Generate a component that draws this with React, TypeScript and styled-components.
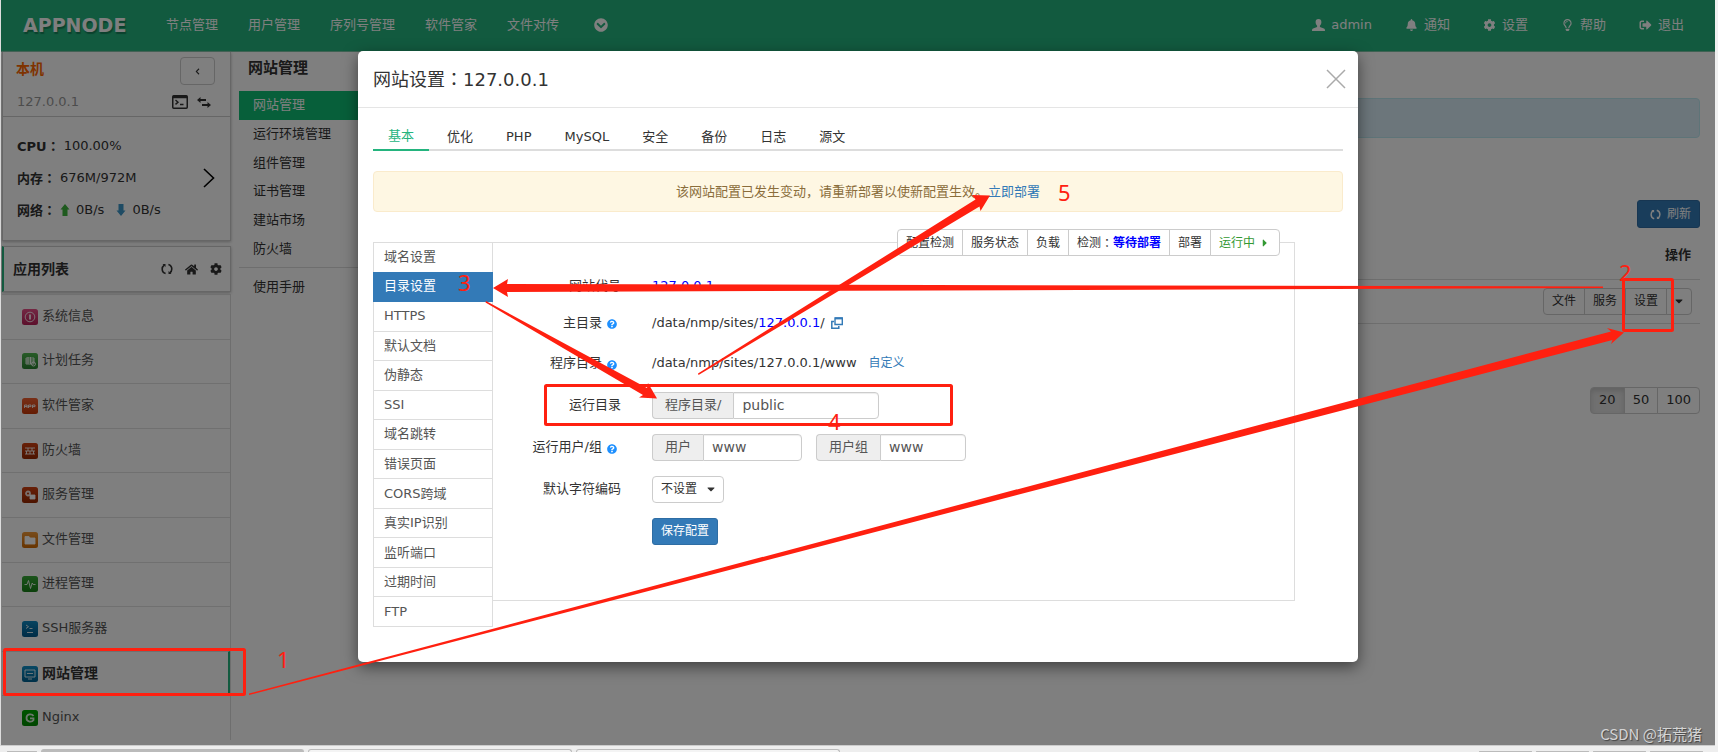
import React from 'react';
import styled, { createGlobalStyle, css } from 'styled-components';
import {
  FaBell, FaCog, FaHome, FaSignOutAlt, FaRegLightbulb, FaChevronLeft,
  FaQuestionCircle, FaChevronCircleDown, FaCaretDown, FaCaretRight,
} from 'react-icons/fa';

const red = '#ff2010';

const GlobalStyle = createGlobalStyle`
  *, *::before, *::after { box-sizing: border-box; }
  html, body { margin: 0; padding: 0; background: #f0f0f0; }
  body, button, input, select {
    font-family: "DejaVu Sans", "Noto Sans CJK SC", sans-serif;
    font-size: 13px;
    line-height: 20px;
    color: #333;
  }
  a { color: inherit; text-decoration: none; }
  button { cursor: pointer; }
  ul { list-style: none; margin: 0; padding: 0; }
  h1, h2 { margin: 0; }
`;

const Screen = styled.div`
  position: relative;
  display: flex;
  flex-direction: column;
  min-height: 100vh;
  overflow: hidden;
`;

const Page = styled.div`
  position: relative;
  flex: 1;
  display: flex;
  flex-direction: column;
  margin-right: 3px;
  background: #fff;
  border-left: 1px solid #ddd;
  border-bottom: 1px solid #ccc;
`;

const Header = styled.header`
  display: flex;
  align-items: center;
  justify-content: space-between;
  height: 52px;
  padding: 0 31px 1px 22px;
  background: #24b47e;
  border-bottom: 1px solid #7cc4a6;
  color: #fff;
`;

const Logo = styled.a`
  width: 143px;
  font-family: "DejaVu Sans", sans-serif;
  font-size: 19px;
  font-weight: bold;
  text-shadow: 1px 2px 1px #16825a;
`;

const Nav = styled.nav<{ $gap: number }>`
  display: flex;
  align-items: center;
  gap: ${p => p.$gap}px;
`;

const Brand = styled.div`
  display: flex;
  align-items: center;
`;

const NavLink = styled.a`
  display: flex;
  align-items: center;
  gap: 6px;
  svg { width: 13px; height: 12px; }
`;

const MoreButton = styled.button`
  display: flex;
  margin-left: 5px;
  padding: 0;
  border: 0;
  background: none;
  color: #fff;
`;

const Body = styled.div`
  flex: 1;
  display: flex;
`;

const Sidebar = styled.aside`
  display: flex;
  flex-direction: column;
  width: 230px;
  padding: 0 0 5px 1px;
`;

const NodeCard = styled.section`
  height: 189px;
  border: 1px solid #ccc;
  border-top: 0;
  box-shadow: 0 1px 3px #bbb;
`;

const NodeHead = styled.div`
  height: 65px;
  padding: 5px 15px 0 13px;
  border-bottom: 1px solid #ccc;
`;

const Line = styled.div`
  display: flex;
  align-items: center;
  justify-content: space-between;
`;

const NodeName = styled.h2`
  margin-bottom: 4px;
  font-size: 14px;
  line-height: 20px;
  color: #ff6600;
`;

const BackButton = styled.button`
  display: flex;
  align-items: center;
  justify-content: center;
  width: 35px;
  height: 28px;
  border: 1px solid #ccc;
  border-radius: 4px;
  background: #fff;
`;

const NodeIp = styled.div`
  display: flex;
  align-items: center;
  justify-content: space-between;
  height: 34px;
  padding: 0 4px 0 1px;
  color: #999;
`;

const IconRow = styled.span<{ $gap: number }>`
  display: flex;
  align-items: center;
  gap: ${p => p.$gap}px;
  color: #333;
`;

const Stats = styled.div`
  display: flex;
  align-items: center;
  justify-content: space-between;
  padding: 13px 15px 0 14px;
`;

const StatRow = styled.div`
  display: flex;
  align-items: center;
  gap: 4px;
  height: 32px;
  svg { margin-right: 2px; }
`;

const DownRate = styled.span`
  display: flex;
  align-items: center;
  gap: 4px;
  margin-left: 8px;
`;

/* The traditional face centres its full-width colon in the em square. */
const Colon = styled.span`
  font-family: "Noto Sans CJK TC", sans-serif;
`;

const AppHead = styled.section`
  display: flex;
  align-items: center;
  justify-content: space-between;
  height: 46px;
  margin: 5px 0 2px;
  padding: 0 8px 0 9px;
  border: 1px solid #ccc;
  border-left: 2px solid #24b47e;
  box-shadow: 0 1px 3px #bbb;
`;

const AppTitle = styled.h2`
  font-size: 14px;
  line-height: 20px;
`;

const AppList = styled.ul`
  flex: 1;
  display: grid;
  grid-auto-rows: 1fr;
  border-right: 1px solid #ddd;
`;

const AppItem = styled.li<{ $active?: boolean }>`
  border-top: 1px solid #e0e0e0;
  color: #555;
  a { display: flex; align-items: center; gap: 4px; height: 100%; padding: 0 0 2px 20px; }
  ${p => p.$active && css`
    border-right: 2px solid #24b47e;
    color: #333;
    font-size: 14px;
    font-weight: bold;
  `}
`;

const SubMenu = styled.nav`
  width: 170px;
  padding: 6px 0 0 8px;
`;

const SubTitle = styled.h2`
  padding-left: 9px;
  font-size: 15px;
  line-height: 20px;
`;

const SubList = styled.ul`
  display: grid;
  grid-auto-rows: 1fr;
  height: 172px;
  margin-top: 13px;
`;

const SubItem = styled.li<{ $active?: boolean }>`
  display: flex;
  align-items: center;
  padding-left: 14px;
  background: ${p => (p.$active ? '#0ebe74' : 'transparent')};
  color: ${p => (p.$active ? '#fff' : '#333')};
`;

const Manual = styled.div`
  margin-top: 4px;
  padding: 9px 14px;
  border-top: 1px solid #ddd;
`;

const Main = styled.main`
  flex: 1;
  display: flex;
  flex-direction: column;
  align-items: flex-end;
  padding: 46px 15px 0 16px;
`;

const Info = styled.div`
  width: 100%;
  height: 40px;
  background: #d9edf7;
  border: 1px solid #bce8f1;
  border-radius: 4px;
`;

const Primary = styled.button<{ $wide?: boolean }>`
  display: flex;
  align-items: center;
  gap: 6px;
  height: ${p => (p.$wide ? 28 : 27)}px;
  padding: 0 8px 0 ${p => (p.$wide ? 12 : 8)}px;
  background: #337ab7;
  border: 1px solid #2e6da4;
  border-radius: 3px;
  color: #fff;
  font-size: 12px;
`;

const RefreshSlot = styled.div`
  margin-top: 62px;
`;

const SiteTable = styled.table`
  width: 100%;
  border-collapse: collapse;
  th { height: 51px; padding: 4px 9px 0; text-align: right; }
  td { height: 44px; padding: 0 8px; border-top: 1px solid #ddd; border-bottom: 1px solid #ddd; }
`;

const Group = styled.div`
  display: flex;
  justify-content: flex-end;
`;

const GroupButton = styled.button<{ $on?: boolean; $size?: number; $color?: string }>`
  display: flex;
  align-items: center;
  height: 27px;
  margin-left: -1px;
  padding: 0 8px;
  border: 1px solid #ccc;
  background: ${p => (p.$on ? '#e0e0e0' : '#fff')};
  box-shadow: ${p => (p.$on ? 'inset 0 3px 5px rgba(0,0,0,.13)' : 'none')};
  font-size: ${p => p.$size ?? 12}px;
  color: ${p => p.$color ?? '#333'};
  &:first-child { margin-left: 0; border-radius: 4px 0 0 4px; }
  &:last-child { border-radius: 0 4px 4px 0; }
  b { color: #00f; }
  svg { margin-left: 4px; }
`;

const CaretButton = styled(GroupButton)`
  padding: 0 6px;
  svg { margin: 0; }
`;

const PageSizes = styled.div`
  margin-top: 63px;
`;

const Backdrop = styled.div`
  position: absolute;
  inset: 0;
  display: flex;
  align-items: flex-start;
  justify-content: center;
  padding-top: 51px;
  background: rgba(0, 0, 0, 0.5);
`;

const Modal = styled.section`
  width: 1000px;
  padding-bottom: 35px;
  background: #fff;
  border-radius: 5px;
  box-shadow: 0 5px 15px rgba(0, 0, 0, 0.5);
`;

const ModalHead = styled.header`
  display: flex;
  align-items: center;
  justify-content: space-between;
  height: 57px;
  padding: 0 12px 1px 15px;
  border-bottom: 1px solid #e5e5e5;
`;

const ModalTitle = styled.h1`
  font-size: 18px;
  font-weight: normal;
  line-height: 26px;
`;

const Close = styled.button`
  display: flex;
  padding: 0;
  border: 0;
  background: none;
`;

const ModalBody = styled.div`
  padding: 14px 15px 0;
`;

const Tabs = styled.div`
  display: flex;
  align-items: flex-end;
  gap: 3px;
  height: 29px;
  border-bottom: 2px solid #ddd;
`;

const Tab = styled.button<{ $active?: boolean }>`
  height: 31px;
  margin-bottom: -2px;
  padding: ${p => (p.$active ? 2 : 5)}px 15px 0;
  border: 0;
  border-bottom: 2px solid ${p => (p.$active ? '#24b47e' : 'transparent')};
  background: none;
  color: ${p => (p.$active ? '#24b47e' : '#333')};
`;

const Warning = styled.div`
  display: flex;
  align-items: center;
  justify-content: center;
  height: 41px;
  margin-top: 20px;
  background: #fef7e3;
  border: 1px solid #faebcc;
  border-radius: 4px;
  color: #8a6d3b;
`;

const Link = styled.a<{ $small?: boolean }>`
  font-size: ${p => (p.$small ? 12 : 13)}px;
  color: #337ab7;
`;

const Settings = styled.div`
  display: flex;
  align-items: flex-start;
  margin-top: 30px;
`;

const SideTabs = styled.ul`
  display: grid;
  grid-auto-rows: 1fr;
  width: 120px;
  height: 385px;
  border: 1px solid #ddd;
  border-bottom: 0;
`;

const SideTab = styled.li<{ $active?: boolean }>`
  display: flex;
  align-items: center;
  padding-left: 10px;
  border-bottom: 1px solid #ddd;
  color: #555;
  ${p => p.$active && css`
    margin: -1px -1px 0;
    padding-left: 11px;
    background: #337ab7;
    border-color: #337ab7;
    color: #fff;
  `}
`;

const Panel = styled.form`
  position: relative;
  flex: 1;
  margin-right: 48px;
  padding: 26px 0 48px;
  border: 1px solid #ddd;
  border-left: 0;
`;

const Actions = styled.div`
  position: absolute;
  top: -14px;
  right: 14px;
  background: #fff;
`;

const Row = styled.div<{ $height?: number }>`
  display: grid;
  grid-template-columns: 128px 1fr;
  align-items: center;
  column-gap: 31px;
  height: ${p => p.$height ?? 42}px;
`;

const Label = styled.label`
  display: flex;
  align-items: center;
  justify-content: flex-end;
  gap: 5px;
  svg { margin: 3px 4px 0 0; color: #1e90ff; }
`;

const Value = styled.div<{ $gap?: number }>`
  display: flex;
  align-items: center;
  gap: ${p => p.$gap ?? 0}px;
  a { color: #00f; }
  ${Link} { color: #337ab7; }
`;

const InputGroup = styled.div`
  display: flex;
  height: 27px;
`;

const Addon = styled.span`
  display: flex;
  align-items: center;
  padding: 0 12px;
  background: #eee;
  border: 1px solid #ccc;
  border-right: 0;
  border-radius: 4px 0 0 4px;
  color: #555;
`;

const Input = styled.input<{ $width: number }>`
  width: ${p => p.$width}px;
  padding: 0 8px;
  border: 1px solid #ccc;
  border-radius: 0 4px 4px 0;
  box-shadow: inset 0 1px 1px rgba(0, 0, 0, 0.075);
  font-size: 14px;
  color: #555;
  outline: 0;
`;

const SelectBox = styled.span`
  display: grid;
  align-items: center;
  justify-items: end;
  width: 72px;
  > * { grid-area: 1 / 1; }
  svg { margin-right: 7px; pointer-events: none; }
`;

const Select = styled.select`
  width: 100%;
  height: 27px;
  padding: 0 8px;
  appearance: none;
  border: 1px solid #ccc;
  border-radius: 4px;
  background: #fff;
  font-size: 12px;
`;

const Footer = styled.footer`
  display: flex;
  align-items: flex-end;
  gap: 4px;
  height: 6px;
  padding: 0 15px 0 7px;
  background: #eee;
`;

const Stub = styled.span<{ $width: number; $kind?: 'fill' | 'open' }>`
  width: ${p => p.$width}px;
  height: ${p => (p.$kind ? 3 : 1)}px;
  border: 1px solid #bbb;
  border-bottom: 0;
  border-radius: 3px 3px 0 0;
  background: ${p => (p.$kind === 'fill' ? '#bbb' : '#f4f4f4')};
`;

const Spacer = styled.span`
  flex: 1;
`;

const Marks = styled.svg`
  position: absolute;
  top: 0;
  left: 0;
  pointer-events: none;
  text { font: 22px "Noto Sans", sans-serif; fill: ${red}; }
`;

const Watermark = styled.span`
  position: absolute;
  right: 16px;
  bottom: 8px;
  font-family: "Noto Sans CJK SC", sans-serif;
  font-size: 15px;
  color: #d4d4d4;
  text-shadow: 1px 1px 1px #444;
`;

const TileBox = styled.svg`
  flex: none;
  margin-top: 2px;
`;

const UserIcon = () => (
  <svg viewBox="0 0 13 12" fill="currentColor">
    <path d="M6.500 0C8.500 0 9.400 1.300 9.400 3c0 1.800-.7 3-1.500 3.800v1.300l4 1.500c.8.300 1.100.9 1.100 2.400H0c0-1.500.3-2.100 1.100-2.400l4-1.500V6.800C4.300 6 3.600 4.800 3.600 3c0-1.700.9-3 2.900-3z" />
  </svg>
);

const RateArrow = ({ down }: { down?: boolean }) => (
  <svg width="10" height="12" viewBox="0 0 10 12" fill={down ? '#3c96c8' : '#3cb43c'}>
    <path d={down ? 'M5 12L.5 6.500h2V0h5v6.500h2z' : 'M5 0l4.500 5.500h-2V12h-5V5.500h-2z'} />
  </svg>
);

const Cycle = ({ size = 12 }: { size?: number }) => (
  <svg width={size} height={size} viewBox="0 0 12 12" fill="none" stroke="currentColor" strokeWidth="1.6">
    <path d="M4.6 10.6C2.6 10 1.2 8.2 1.2 6c0-1.600.8-3 2-3.900M7.400 1.400C9.400 2 10.800 3.800 10.800 6c0 1.600-.8 3-2 3.900" />
    <path d="M1.500 1h3v3zM10.500 11h-3V8z" fill="currentColor" stroke="none" />
  </svg>
);

const TerminalIcon = () => (
  <svg width="16" height="14" viewBox="0 0 16 14" fill="none" stroke="currentColor">
    <rect x=".75" y=".75" width="14.500" height="12.500" rx="1" strokeWidth="1.500" />
    <path d="M1 2h14" strokeWidth="2.500" />
    <path d="M3.500 5l2.500 2.200-2.500 2.200M8 9.500h3.500" strokeWidth="1.400" />
  </svg>
);

const SwapIcon = () => (
  <svg width="14" height="11" viewBox="0 0 14 11" fill="currentColor">
    <path d="M3.500 0v2H9v2H3.500v2L0 3zM10.500 5v2H5v2h5.500v2L14 8z" />
  </svg>
);

const WindowsIcon = () => (
  <svg width="12" height="12" viewBox="0 0 12 12" fill="none" stroke="#337ab7">
    <path d="M4 1h7.300v6.500H4z" strokeWidth="1.400" />
    <path d="M4 1.400h7.500" strokeWidth="2" />
    <path d="M3 4.500H.8v6.800h7V9" strokeWidth="1.500" />
  </svg>
);

const glyphs: Record<string, React.ReactNode> = {
  info: <><circle cx="8" cy="8" r="4.800" /><path d="M8 5.500v5" strokeWidth="2" /></>,
  cron: <><path d="M4 5h8v6H4zM4 7h8M4 9h8M6 4v7M8.500 4v7" /><circle cx="11.500" cy="11" r="2" /></>,
  app: <path d="M2.500 10V7h2.600v3M2.500 8.500h2.600M6.500 10V7H9v1.600H6.500M10.500 10V7H13v1.600h-2.500" />,
  wall: <path d="M3 5h10M3 8h10M3 11h10M6 5v3M10 5v3M4.500 8v3M8 8v3M11.500 8v3" />,
  service: <><circle cx="6" cy="6.500" r="2" strokeWidth="1.800" /><path d="M8 8h5v4H8z" fill="#fff" /></>,
  folder: <path d="M3 4.500h4l1 1.500h5v6H3z" fill="#fff" />,
  pulse: <path d="M2.500 8.500h2.500l1.500-4 2 8L10.200 7l1 1.500h2.300" />,
  ssh: <path d="M4 4l2.500 1.700L4 7.500M7.500 7.500h3M5 11.500h6" />,
  site: <path d="M3 4h10v7H3zM5 7.500h6M6 13h4" />,
  nginx: <path d="M11.500 6C10 3.500 4.500 3.800 4.500 8s5.500 4.500 7 2V8.300H8" strokeWidth="1.800" />,
};

const Tile = ({ name, color, dark }: { name: string; color: string; dark: string }) => (
  <TileBox width="16" height="16" viewBox="0 0 16 16">
    <defs>
      <linearGradient id={`tile-${name}`} x1="0" y1="0" x2="0" y2="1">
        <stop stopColor={color} /><stop offset="1" stopColor={dark} />
      </linearGradient>
    </defs>
    <rect width="16" height="16" rx="2.500" fill={`url(#tile-${name})`} />
    <g fill="none" stroke="#fff" strokeOpacity=".85">{glyphs[name]}</g>
  </TileBox>
);

const apps = [
  ['系统信息', 'info', '#e85088', '#b82058'],
  ['计划任务', 'cron', '#50b850', '#288030'],
  ['软件管家', 'app', '#f06030', '#c83808'],
  ['防火墙', 'wall', '#d04010', '#982800'],
  ['服务管理', 'service', '#d04010', '#982800'],
  ['文件管理', 'folder', '#f09838', '#d06800'],
  ['进程管理', 'pulse', '#38a838', '#188018'],
  ['SSH服务器', 'ssh', '#1088c0', '#00588c'],
  ['网站管理', 'site', '#1090c8', '#006090'],
  ['Nginx', 'nginx', '#00a800', '#008c00'],
];

const sideTabs = ['域名设置', '目录设置', 'HTTPS', '默认文档', '伪静态', 'SSI', '域名跳转', '错误页面', 'CORS跨域', '真实IP识别', '监听端口', '过期时间', 'FTP'];

const Help = () => <FaQuestionCircle size={10} />;

export default function App() {
  return (
    <Screen>
      <GlobalStyle />
      <Page>
        <Header>
          <Brand>
            <Logo href="#">APPNODE</Logo>
            <Nav $gap={30}>
              {['节点管理', '用户管理', '序列号管理', '软件管家', '文件对传'].map(t => <NavLink key={t} href="#">{t}</NavLink>)}
              <MoreButton type="button" aria-label="更多"><FaChevronCircleDown size={14} /></MoreButton>
            </Nav>
          </Brand>
          <Nav $gap={33}>
            <NavLink href="#"><UserIcon />admin</NavLink>
            <NavLink href="#"><FaBell />通知</NavLink>
            <NavLink href="#"><FaCog />设置</NavLink>
            <NavLink href="#"><FaRegLightbulb />帮助</NavLink>
            <NavLink href="#"><FaSignOutAlt />退出</NavLink>
          </Nav>
        </Header>
        <Body>
          <Sidebar>
            <NodeCard>
              <NodeHead>
                <Line>
                  <NodeName>本机</NodeName>
                  <BackButton type="button" aria-label="返回"><FaChevronLeft size={7} /></BackButton>
                </Line>
                <NodeIp>127.0.0.1<IconRow $gap={9}><TerminalIcon /><SwapIcon /></IconRow></NodeIp>
              </NodeHead>
              <Stats>
                <div>
                  <StatRow><b>CPU<Colon>：</Colon></b>100.00%</StatRow>
                  <StatRow><b>内存<Colon>：</Colon></b>676M/972M</StatRow>
                  <StatRow>
                    <b>网络<Colon>：</Colon></b><RateArrow />0B/s
                    <DownRate><RateArrow down />0B/s</DownRate>
                  </StatRow>
                </div>
                <svg width="12" height="20" viewBox="0 0 12 20" fill="none" stroke="#000" strokeWidth="1.600">
                  <path d="M1 1l9.500 9L1 19" />
                </svg>
              </Stats>
            </NodeCard>
            <AppHead>
              <AppTitle>应用列表</AppTitle>
              <IconRow $gap={12}><Cycle /><FaHome size={13} /><FaCog size={12} /></IconRow>
            </AppHead>
            <AppList>
              {apps.map(([label, name, color, dark]) => (
                <AppItem key={label} $active={name === 'site'}>
                  <a href="#"><Tile name={name} color={color} dark={dark} />{label}</a>
                </AppItem>
              ))}
            </AppList>
          </Sidebar>
          <SubMenu>
            <SubTitle>网站管理</SubTitle>
            <SubList>
              {['网站管理', '运行环境管理', '组件管理', '证书管理', '建站市场', '防火墙'].map((t, i) => (
                <SubItem key={t} $active={i === 0}><a href="#">{t}</a></SubItem>
              ))}
            </SubList>
            <Manual><a href="#">使用手册</a></Manual>
          </SubMenu>
          <Main>
            <Info />
            <RefreshSlot><Primary type="button" $wide><Cycle size={11} />刷新</Primary></RefreshSlot>
            <SiteTable>
              <thead><tr><th scope="col">操作</th></tr></thead>
              <tbody>
                <tr>
                  <td>
                    <Group>
                      <GroupButton type="button">文件</GroupButton>
                      <GroupButton type="button">服务</GroupButton>
                      <GroupButton type="button">设置</GroupButton>
                      <CaretButton type="button" aria-label="更多操作"><FaCaretDown size={12} /></CaretButton>
                    </Group>
                  </td>
                </tr>
              </tbody>
            </SiteTable>
            <PageSizes>
              <Group>
                <GroupButton type="button" $size={13} $on>20</GroupButton>
                <GroupButton type="button" $size={13}>50</GroupButton>
                <GroupButton type="button" $size={13}>100</GroupButton>
              </Group>
            </PageSizes>
          </Main>
        </Body>
        <Backdrop>
          <Modal role="dialog" aria-labelledby="dialog-title">
            <ModalHead>
              <ModalTitle id="dialog-title">网站设置<Colon>：</Colon>127.0.0.1</ModalTitle>
              <Close type="button" aria-label="关闭">
                <svg width="20" height="20" viewBox="0 0 20 20" stroke="#aaa" strokeWidth="1.500"><path d="M1 1l18 18M19 1L1 19" /></svg>
              </Close>
            </ModalHead>
            <ModalBody>
              <Tabs>
                {['基本', '优化', 'PHP', 'MySQL', '安全', '备份', '日志', '源文'].map((t, i) => (
                  <Tab key={t} type="button" $active={i === 0}>{t}</Tab>
                ))}
              </Tabs>
              <Warning>该网站配置已发生变动，请重新部署以使新配置生效。<Link href="#">立即部署</Link></Warning>
              <Settings>
                <SideTabs>
                  {sideTabs.map((t, i) => <SideTab key={t} $active={i === 1}><a href="#">{t}</a></SideTab>)}
                </SideTabs>
                <Panel>
                  <Actions>
                    <Group>
                      <GroupButton type="button">配置检测</GroupButton>
                      <GroupButton type="button">服务状态</GroupButton>
                      <GroupButton type="button">负载</GroupButton>
                      <GroupButton type="button">检测<Colon>：</Colon><b>等待部署</b></GroupButton>
                      <GroupButton type="button">部署</GroupButton>
                      <GroupButton type="button" $color="#339933">运行中 <FaCaretRight size={12} /></GroupButton>
                    </Group>
                  </Actions>
                  <Row $height={34}><Label as="span">网站代号</Label><Value><a href="#">127.0.0.1</a></Value></Row>
                  <Row $height={39}>
                    <Label as="span">主目录<Help /></Label>
                    <Value $gap={6}><span>/data/nmp/sites/<a href="#">127.0.0.1</a>/</span><WindowsIcon /></Value>
                  </Row>
                  <Row>
                    <Label as="span">程序目录<Help /></Label>
                    <Value $gap={12}>/data/nmp/sites/127.0.0.1/www<Link href="#" $small>自定义</Link></Value>
                  </Row>
                  <Row>
                    <Label htmlFor="run-dir">运行目录</Label>
                    <InputGroup><Addon>程序目录/</Addon><Input id="run-dir" $width={146} defaultValue="public" /></InputGroup>
                  </Row>
                  <Row>
                    <Label htmlFor="run-user">运行用户/组<Help /></Label>
                    <Value $gap={14}>
                      <InputGroup><Addon>用户</Addon><Input id="run-user" $width={99} defaultValue="www" /></InputGroup>
                      <InputGroup><Addon>用户组</Addon><Input aria-label="用户组" $width={86} defaultValue="www" /></InputGroup>
                    </Value>
                  </Row>
                  <Row>
                    <Label htmlFor="charset">默认字符编码</Label>
                    <SelectBox><Select id="charset"><option>不设置</option></Select><FaCaretDown size={12} /></SelectBox>
                  </Row>
                  <Row><span /><Value><Primary type="button">保存配置</Primary></Value></Row>
                </Panel>
              </Settings>
            </ModalBody>
          </Modal>
        </Backdrop>
      </Page>
      <Footer>
        <Stub $width={30} />
        <Stub $width={263} $kind="fill" />
        <Stub $width={264} $kind="open" />
        <Stub $width={264} $kind="open" />
        <Spacer />
        <Stub $width={53} /><Stub $width={53} /><Stub $width={53} /><Stub $width={53} />
      </Footer>
      <Marks width="1718" height="752" viewBox="0 0 1718 752">
        <g fill="none" stroke={red} strokeWidth="3">
          <rect x="4.500" y="649.500" width="240" height="45" rx="1" />
          <rect x="1623.500" y="279.500" width="49" height="51" rx="1" />
          <rect x="545.500" y="385.500" width="406" height="39" rx="1" />
        </g>
        <g fill={red}>
          <path d="M249 693.500L1611 331.500 1607 328 1624 332.500 1611 344 1612.500 340 249 695z" />
          <path d="M1603 286.500L507 284 508 279 493 288 508 297 507 292 1603 288z" />
          <path d="M486 301L647 388 648 383 657 398.500 639 397.500 643 395 485.500 302.500z" />
          <path d="M698 373.500L975.500 199.500 972 195 990 195.500 980.500 211 979.500 206.500 698.500 375z" />
        </g>
        <text x="277" y="668">1</text>
        <text x="1619" y="281">2</text>
        <text x="458" y="291">3</text>
        <text x="828" y="430">4</text>
        <text x="1058" y="201">5</text>
      </Marks>
      <Watermark>CSDN @拓荒猪</Watermark>
    </Screen>
  );
}
